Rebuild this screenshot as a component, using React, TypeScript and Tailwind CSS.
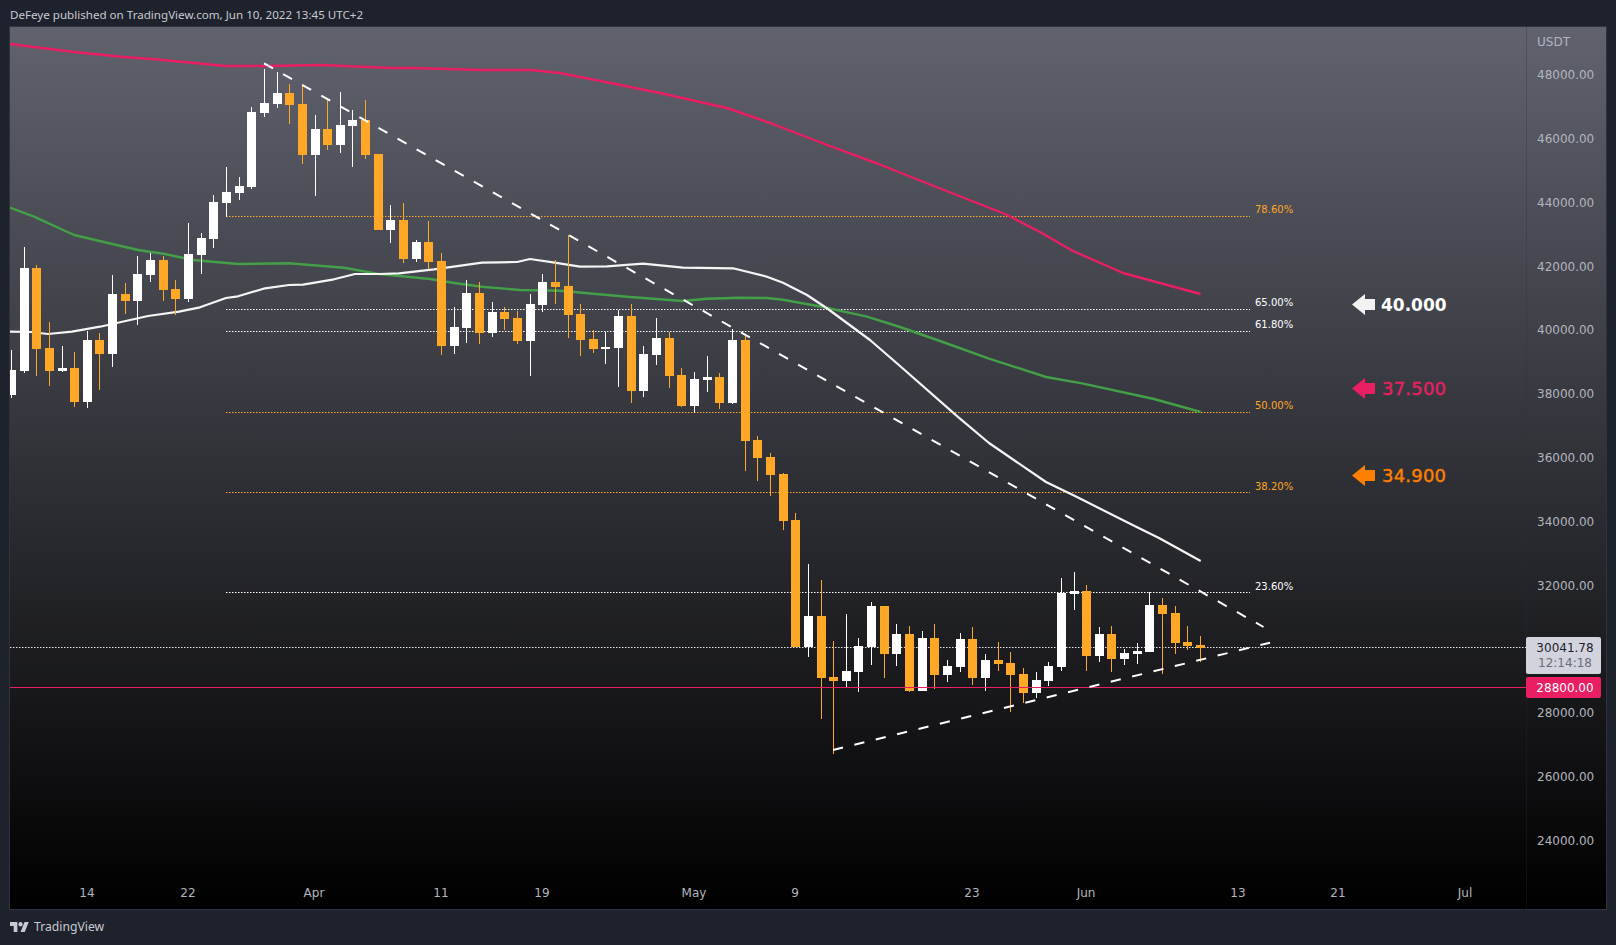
const CANDLES: [string, number, number, number, number][] = [
  ['w',350,398,370,395],['w',247,373,268,371],['o',265,376,268,349],['o',322,386,348,371],['w',346,372,368,371],
  ['o',352,407,368,402],['w',331,408,340,402],['o',333,390,340,354],['w',275,367,294,354],['o',283,314,294,301],
  ['w',256,325,274,301],['w',253,282,260,275],['o',256,301,260,290],['o',280,315,289,299],['w',223,302,254,299],
  ['w',233,274,238,255],['w',195,248,202,239],['w',167,217,192,203],['w',177,200,186,193],['w',107,189,112,187],
  ['w',69,117,103,113],['w',72,108,93,104],['o',84,124,93,105],['o',85,164,104,155],['w',115,196,129,155],
  ['o',100,150,129,145],['w',92,153,125,145],['w',110,167,120,126],['o',100,159,120,155],['o',154,230,154,230],
  ['w',205,243,220,230],['o',203,263,220,259],['w',240,262,242,259],['o',221,269,242,262],['o',253,355,261,346],
  ['w',307,354,327,346],['w',280,343,293,328],['o',282,344,293,333],['w',302,337,312,333],['o',307,330,312,319],
  ['o',311,344,318,341],['w',294,376,304,341],['w',274,312,282,305],['o',260,304,282,287],['o',235,338,286,315],
  ['o',304,356,314,340],['o',330,353,339,349],['w',332,364,347,349],['w',310,387,316,348],['o',304,403,316,391],
  ['w',346,397,354,391],['w',318,365,338,355],['o',332,388,338,376],['o',368,407,375,406],['w',372,413,379,406],
  ['w',356,392,377,380],['o',373,409,377,403],['w',329,404,340,403],['o',335,471,340,441],['o',436,481,440,458],
  ['o',453,496,457,475],['o',473,530,474,521],['o',513,647,520,647],['w',564,657,616,647],['o',580,719,616,678],
  ['o',641,754,677,681],['w',614,688,671,681],['w',638,692,646,672],['w',602,665,606,647],['o',606,678,606,654],
  ['w',624,666,634,654],['o',626,692,634,691],['w',631,691,638,691],['o',624,689,638,675],['w',660,682,666,675],
  ['w',633,672,639,667],['o',627,685,639,678],['w',654,691,660,678],['o',642,671,660,664],['o',652,712,663,675],
  ['o',668,703,674,693],['w',672,698,680,693],['w',662,686,666,681],['w',578,671,593,667],['w',572,610,591,594],
  ['o',585,671,591,656],['w',627,662,634,656],['o',626,672,634,659],['w',649,665,653,659],['w',643,664,651,654],
  ['w',592,652,605,652],['o',598,674,605,614],['o',606,654,613,643],['o',626,650,642,646],['o',636,662,645,648],
];

const PINK = [[10,44],[74,52],[124,57],[155,59.3],[226,66],[269,66],[320,65],[393,68],[413,68],[482,70],[531,70],[560,73],[618,84.5],[660,93],[727,108],[773,124],[824.5,144],[876,163],[927.5,183.5],[1005,214],[1040,232],[1072,250.5],[1123,273],[1200.6,294]];
const GREEN = [[10,207.5],[34,216.7],[74,235],[138,250],[165,254],[193,260],[238,264],[289,263.3],[344,267.7],[379,274],[430,279],[454.5,283],[482,286.7],[520,290],[560,290.7],[630,297],[683,301],[707,298.7],[740,297.7],[767,298],[783,299.7],[823,307],[867,316.7],[900,327],[940,341],[989,358.6],[1046,377],[1082,383.4],[1154,399],[1200.6,412]];
const WHITE = [[10,331.7],[31,332],[48,334],[72,331.7],[100,326.7],[148,316],[179,311.7],[200,307.3],[226,298],[238,296.3],[265,288.3],[289,285],[303,284.7],[334,279.3],[355,274],[379,274],[399,273.3],[434,269.3],[482,262.7],[500,262.3],[517,262],[530,259],[553,262.3],[580,266.7],[607,266.3],[643,263.7],[683,267.7],[733,268.3],[767,276.7],[783,282.7],[807,295],[828,309],[870,340],[900,366],[958.5,417.4],[989,443],[1046,482],[1077,497],[1133.6,525.6],[1159,538],[1200.7,561]];
const pts = (a: number[][]) => a.map((p) => p.join(',')).join(' ');

const FIBS = [
  { y: 216, label: '78.60%', ly: 210, c: '#ffa726' },
  { y: 309, label: '65.00%', ly: 303, c: '#ffffff' },
  { y: 331, label: '61.80%', ly: 325, c: '#ffffff' },
  { y: 412, label: '50.00%', ly: 406, c: '#ffa726' },
  { y: 492, label: '38.20%', ly: 487, c: '#ffa726' },
  { y: 592, label: '23.60%', ly: 587, c: '#ffffff' },
];
const PRICES = ['48000.00','46000.00','44000.00','42000.00','40000.00','38000.00','36000.00','34000.00','32000.00','','28000.00','26000.00','24000.00'];
const DATES: [string, number][] = [['14',87],['22',188],['Apr',314],['11',441],['19',542],['May',694],['9',795],['23',972],['Jun',1086],['13',1238],['21',1338],['Jul',1465]];
const NOTES = [
  { y: 304.5, label: '40.000', c: '#f2f2f2', t: 'text-white text-[17px] font-bold', x: 1381 },
  { y: 388.5, label: '37.500', c: '#e91e63', t: "text-[#e91e63] text-[18px] tracking-[0.2px] [-webkit-text-stroke:0.4px_#e91e63]", x: 1382 },
  { y: 475.5, label: '34.900', c: '#ff8000', t: "text-[#ff8000] text-[18px] tracking-[0.2px] [-webkit-text-stroke:0.4px_#ff8000]", x: 1382 },
];

export default function App() {
  return (
    <div className="flex h-[945px] w-[1616px] flex-col overflow-hidden bg-[#1e222d] font-['DejaVu_Sans',sans-serif]">
      <div className="flex h-[26px] shrink-0 items-center pl-[10px] pt-[3px] font-['Noto_Sans',sans-serif] text-[11.6px] text-[#c8cad0]">
        DeFeye published on TradingView.com, Jun 10, 2022 13:45 UTC+2
      </div>
      <div className="relative ml-[9px] flex h-[884px] w-[1598px] shrink-0 border border-[#2f333f] bg-linear-to-b/srgb from-[#60626e] to-black">
        <div className="relative flex-1 overflow-hidden">
          <svg className="absolute inset-0 h-full w-full" viewBox="10 27 1516 882" fill="none">
            {FIBS.map((f) => (
              <line key={f.y} x1={226} x2={1250} y1={f.y + 0.5} y2={f.y + 0.5} stroke={f.c} strokeWidth={1} strokeDasharray="1.5 1.5" />
            ))}
            <line x1={10} x2={1526} y1={647.5} y2={647.5} stroke="#e6e6e6" strokeWidth={1} strokeDasharray="1.5 1.5" />
            <polyline points={pts(GREEN)} stroke="#43a047" strokeWidth={2.4} strokeLinejoin="round" />
            <polyline points={pts(WHITE)} stroke="#f5f5f5" strokeWidth={2.2} strokeLinejoin="round" />
            <polyline points={pts(PINK)} stroke="#e91e63" strokeWidth={2.4} strokeLinejoin="round" />
            <g shapeRendering="crispEdges">
              {CANDLES.map(([k, wt, wb, bt, bb], i) => {
                const cx = Math.floor(11.4 + 12.65 * i);
                const fill = k === 'w' ? '#ffffff' : '#ffa726';
                return (
                  <g key={i} fill={fill}>
                    <rect x={cx} y={wt} width={1} height={wb - wt} />
                    <rect x={cx - 4} y={bt} width={9} height={Math.max(bb - bt, 1)} />
                  </g>
                );
              })}
            </g>
            <line x1={10} x2={1526} y1={687.5} y2={687.5} stroke="#e91e63" strokeWidth={1} />
            <line x1={264} y1={63.3} x2={1263.5} y2={627} stroke="#ffffff" strokeWidth={2} strokeDasharray="10.3 11.6" />
            <line x1={833} y1={750} x2={1270} y2={642.7} stroke="#ffffff" strokeWidth={2} strokeDasharray="10.3 11.7" />
            {NOTES.map((n) => (
              <path key={n.y} d={`M1352 ${n.y}L1365 ${n.y - 10.5}V${n.y - 5.5}H1375V${n.y + 5.5}H1365V${n.y + 10.5}Z`} fill={n.c} />
            ))}
          </svg>
          {FIBS.map((f) => (
            <span
              key={f.label}
              className="absolute -translate-y-1/2 whitespace-nowrap text-[10px] leading-none"
              style={{ left: 1255 - 10, top: f.ly - 27, color: f.c }}
            >
              {f.label}
            </span>
          ))}
          {NOTES.map((n) => (
            <span
              key={n.label}
              className={`absolute -translate-y-1/2 whitespace-nowrap leading-none ${n.t}`}
              style={{ left: n.x - 10, top: n.y - 27 }}
            >
              {n.label}
            </span>
          ))}
          {DATES.map(([d, x]) => (
            <span
              key={d}
              className="absolute -translate-x-1/2 -translate-y-1/2 text-[12px] leading-none text-[#b2b5be]"
              style={{ left: x - 10, top: 893 - 27 }}
            >
              {d}
            </span>
          ))}
        </div>
        <div className="relative flex w-[80px] shrink-0 flex-col border-l border-[#2a2e39]/30 pl-[10px] text-[12px] text-[#b2b5be]">
          <div className="flex h-[30px] items-center leading-none">USDT</div>
          <div className="flex flex-col pt-[11px]">
            {PRICES.map((p, i) => (
              <div key={i} className="flex h-[63.85px] items-start leading-[14px]">{p}</div>
            ))}
          </div>
          <div className="absolute left-[-1px] top-[610px] flex h-[37px] w-[75px] flex-col items-center justify-center rounded-[2px] bg-[#d1d4dc] pl-[3px] leading-[15px]">
            <span className="text-[#1e222d]">30041.78</span>
            <span className="text-[#6a6d78]">12:14:18</span>
          </div>
          <div className="absolute left-[-1px] top-[650px] flex h-[21px] w-[75px] items-center justify-center rounded-[2px] bg-[#e91e63] pl-[3px] text-white">
            28800.00
          </div>
        </div>
      </div>
      <div className="flex flex-1 items-start gap-[5px] pl-[10px] pt-[12px]">
        <svg width="19" height="10" viewBox="0 4 36 18" fill="#c8cad0" preserveAspectRatio="none">
          <path d="M14 22H7V11H0V4h14v18zM28 22h-8l7.5-18h8L28 22z" />
          <circle cx="20" cy="8" r="4" />
        </svg>
        <span className="font-['Noto_Sans',sans-serif] text-[12.2px] leading-[10px] text-[#c8cad0]">TradingView</span>
      </div>
    </div>
  );
}
